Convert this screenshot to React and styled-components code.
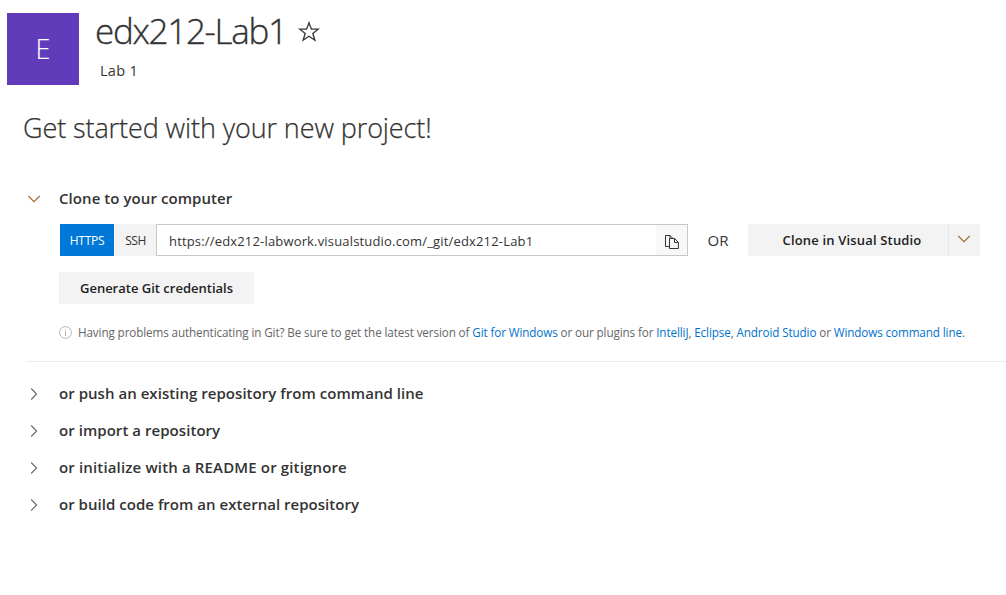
import React from "react";
import styled, { createGlobalStyle } from "styled-components";

const Global = createGlobalStyle`
  body {
    margin: 0;
    background: #fff;
    color: #333;
    font-family: "Open Sans", "Noto Sans", sans-serif;
    overflow: hidden;
  }
`;

const Page = styled.main`
  width: 1006px;
  height: 595px;
  overflow: hidden;
  box-sizing: border-box;
  padding-top: 13px;
  white-space: nowrap;
`;

const Header = styled.header`
  display: flex;
  height: 72px;
  padding-left: 7px;
`;

const Avatar = styled.div`
  width: 72px;
  height: 72px;
  display: flex;
  align-items: center;
  justify-content: center;
  background: #603cba;
  color: #fff;
  font-size: 27px;
  font-weight: 300;
  line-height: 72px;
`;

const ProjectInfo = styled.div`
  padding-left: 16px;
`;

const TitleRow = styled.div`
  display: flex;
  align-items: center;
  height: 38px;
  gap: 11px;
`;

const ProjectTitle = styled.h1`
  margin: -2px 0 0;
  font-size: 35px;
  font-weight: 300;
  line-height: 38px;
  letter-spacing: -1.3px;
  color: #333;
  -webkit-text-stroke: 0.35px #333;
`;

const Description = styled.div`
  margin-top: 10px;
  padding-left: 5px;
  font-size: 14.5px;
  line-height: 20px;
  letter-spacing: 0.3px;
`;

const Heading = styled.h2`
  margin: 24px 0 0 23px;
  font-size: 27px;
  font-weight: 300;
  line-height: 38px;
  letter-spacing: -0.1px;
  color: #333;
  -webkit-text-stroke: 0.25px #333;
`;

const SectionHeader = styled.div`
  display: flex;
  align-items: center;
  height: ${(p) => p.$height}px;
  padding-left: 27px;
`;

const IconSlot = styled.span`
  display: flex;
  width: 14px;
  margin-right: 18px;
  padding-top: 2px;
  justify-content: center;
`;

const SectionTitle = styled.h3`
  margin: 0;
  font-size: 15px;
  font-weight: 600;
  line-height: 20px;
  letter-spacing: ${(p) => p.$spacing || 0}px;
`;

const ClonePanel = styled.section`
  margin-top: 38px;
`;

const CloneRow = styled.div`
  display: flex;
  height: 32px;
  margin: 13px 0 0 60px;
`;

const ProtocolButton = styled.button`
  width: ${(p) => p.$width}px;
  height: 32px;
  margin: 0;
  padding: 1px 0 0;
  border: 0;
  background: ${(p) => (p.$active ? "#0078d7" : "#f3f3f3")};
  color: ${(p) => (p.$active ? "#fff" : "#333")};
  font: 400 12px/31px "Open Sans", sans-serif;
  letter-spacing: ${(p) => p.$spacing}px;
  margin-right: ${(p) => (p.$active ? 1 : 0)}px;
`;

const UrlBox = styled.div`
  box-sizing: border-box;
  width: 532px;
  height: 32px;
  display: flex;
  justify-content: space-between;
  border: 1px solid #c8c8c8;
  padding-left: 12px;
  font-size: 13px;
  line-height: 32px;
  letter-spacing: 0.17px;
`;

const CopyButton = styled.button`
  width: 31px;
  height: 30px;
  padding: 4px 0 0;
  border: 0;
  display: flex;
  align-items: center;
  justify-content: center;
  background: #f8f8f8;
`;

const OrLabel = styled.span`
  width: 60px;
  text-align: center;
  font-size: 15px;
  font-weight: 500;
  line-height: 32px;
`;

const SplitButton = styled.div`
  display: flex;
  width: 232px;
  height: 32px;
  background: #f3f3f3;
`;

const ActionButton = styled.button`
  width: ${(p) => p.$width}px;
  height: 32px;
  padding: 0 0 0 ${(p) => p.$indent || 0}px;
  border: 0;
  background: #f3f3f3;
  color: #222;
  font: 600 13px/32px "Open Sans", sans-serif;
  letter-spacing: ${(p) => p.$spacing}px;
`;

const MenuButton = styled.button`
  box-sizing: border-box;
  width: 32px;
  height: 32px;
  padding: 0 2px 2px 0;
  border: 0;
  border-left: 1px solid #e8e8e8;
  display: flex;
  align-items: center;
  justify-content: center;
  background: transparent;
`;

const Credentials = styled.div`
  margin: 16px 0 0 59px;
  height: 32px;
`;

const HelpLine = styled.p`
  display: flex;
  align-items: center;
  height: 18px;
  margin: 19px 0 0 59px;
  color: #666;
  font-size: 11.7px;
  line-height: 18px;
  letter-spacing: -0.12px;
`;

const HelpText = styled.span`
  margin-left: 6px;
`;

const Link = styled.a`
  color: #0072cc;
`;

const Divider = styled.hr`
  height: 1px;
  border: 0;
  margin: 20px 0 12px 27px;
  background: #eaeaea;
`;

function Chevron({ down, color = "#66686c" }) {
  return down ? (
    <svg width="14" height="8" viewBox="0 0 14 8" fill="none" stroke={color} strokeWidth="1.1">
      <path d="M1.3 1 7 6.7 12.7 1" />
    </svg>
  ) : (
    <svg width="8" height="14" viewBox="0 0 8 14" fill="none" stroke={color} strokeWidth="1.1">
      <path d="M1.2 1.5 6.6 7 1.2 12.5" />
    </svg>
  );
}

function Star() {
  return (
    <svg width="22" height="22" viewBox="0 0 22 22" fill="none" stroke="#333" strokeWidth="1.3">
      <path d="M11 1.8 13.4 8.2H20.2L14.8 12.5 16.9 19.2 11 15.2 5.1 19.2 7.2 12.5 1.8 8.2H8.6Z" />
    </svg>
  );
}

function CopyIcon() {
  return (
    <svg width="14" height="15" viewBox="0 0 14 15" fill="none" stroke="#333" strokeWidth="1">
      <path d="M4.5 11.5H.5V.5H5L8 3.5M5 .5V3.5" />
      <path d="M4.5 3.5H9.5L13.4 7.4V13.5H4.5ZM9.5 3.5V7.5H13.4" />
    </svg>
  );
}

function InfoIcon() {
  return (
    <svg width="13" height="13" viewBox="0 0 13 13" fill="none" stroke="#b5b5b5">
      <circle cx="6.5" cy="6.5" r="5.9" />
      <path d="M6.5 5.3V10M6.5 3V4.2" />
    </svg>
  );
}

const otherOptions = [
  { title: "or push an existing repository from command line", spacing: 0.04 },
  { title: "or import a repository", spacing: 0.05 },
  { title: "or initialize with a README or gitignore", spacing: 0.15 },
  { title: "or build code from an external repository", spacing: 0.03 },
];

export default function App() {
  return (
    <Page>
      <Global />
      <Header>
        <Avatar>E</Avatar>
        <ProjectInfo>
          <TitleRow>
            <ProjectTitle>edx212-Lab1</ProjectTitle>
            <Star />
          </TitleRow>
          <Description>Lab 1</Description>
        </ProjectInfo>
      </Header>
      <Heading>Get started with your new project!</Heading>
      <ClonePanel>
        <SectionHeader $height={26}>
          <IconSlot><Chevron down color="#a06a32" /></IconSlot>
          <SectionTitle $spacing={0.07}>Clone to your computer</SectionTitle>
        </SectionHeader>
        <CloneRow>
          <ProtocolButton $active $width={54} $spacing={-0.3}>HTTPS</ProtocolButton>
          <ProtocolButton $width={41} $spacing={-0.5}>SSH</ProtocolButton>
          <UrlBox>
            <span>https://edx212-labwork.visualstudio.com/_git/edx212-Lab1</span>
            <CopyButton aria-label="Copy"><CopyIcon /></CopyButton>
          </UrlBox>
          <OrLabel>OR</OrLabel>
          <SplitButton>
            <ActionButton $width={200} $indent={8} $spacing={0.17}>Clone in Visual Studio</ActionButton>
            <MenuButton aria-label="More"><Chevron down color="#a06a32" /></MenuButton>
          </SplitButton>
        </CloneRow>
        <Credentials>
          <ActionButton $width={195} $spacing={0}>Generate Git credentials</ActionButton>
        </Credentials>
        <HelpLine>
          <InfoIcon />
          <HelpText>
            Having problems authenticating in Git? Be sure to get the latest version of{" "}
            <Link>Git for Windows</Link> or our plugins for <Link>IntelliJ</Link>, <Link>Eclipse</Link>,{" "}
            <Link>Android Studio</Link> or <Link>Windows command line</Link>.
          </HelpText>
        </HelpLine>
      </ClonePanel>
      <Divider />
      {otherOptions.map((o) => (
        <SectionHeader key={o.title} $height={37}>
          <IconSlot><Chevron /></IconSlot>
          <SectionTitle $spacing={o.spacing}>{o.title}</SectionTitle>
        </SectionHeader>
      ))}
    </Page>
  );
}
